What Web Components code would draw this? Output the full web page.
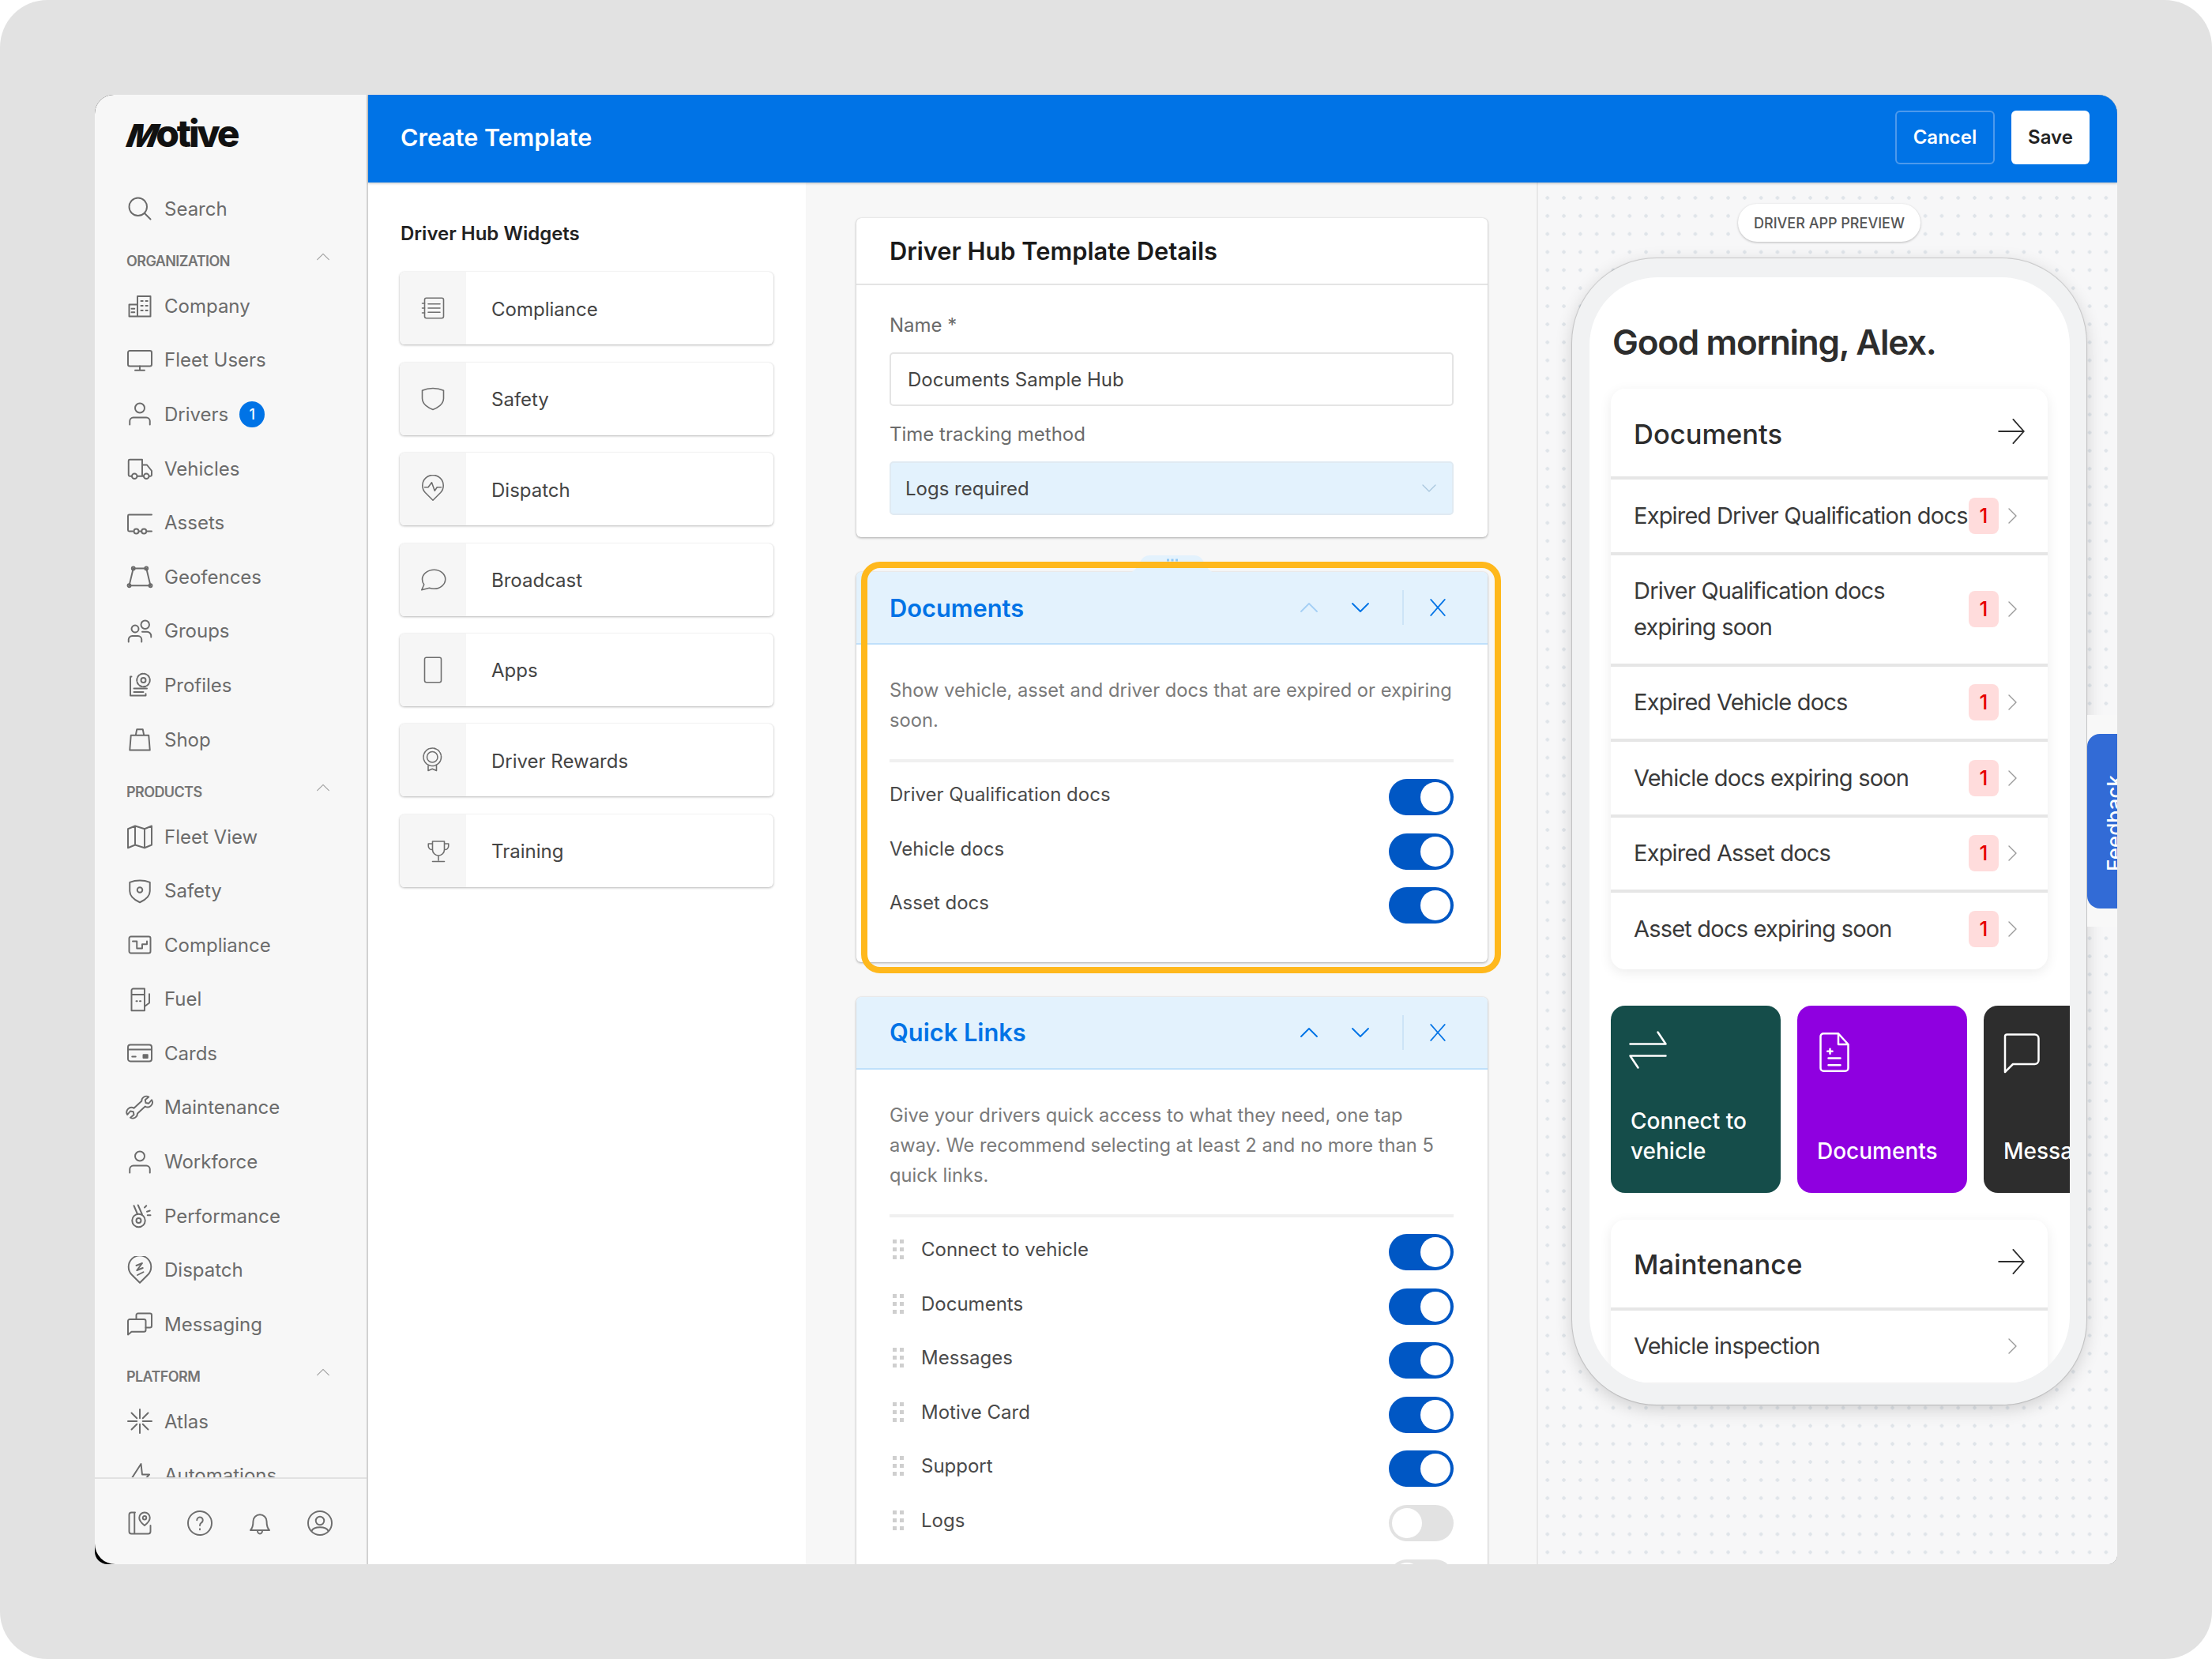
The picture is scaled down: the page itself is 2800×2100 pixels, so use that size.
<!DOCTYPE html>
<html lang="en">
<head>
<meta charset="utf-8">
<title>Create Template</title>
<style>
html, body { margin: 0; padding: 0; background: #fff; }
body { font-family: Inter, "Noto Sans", "Liberation Sans", sans-serif; color: #444; }
</style>
</head>
<body>
<page-frame>
  <side-nav>
    <nav-item icon="search">Search</nav-item>
    <nav-section>ORGANIZATION</nav-section>
    <nav-item icon="company">Company</nav-item>
    <nav-item icon="monitor">Fleet Users</nav-item>
    <nav-item icon="person" count="1">Drivers</nav-item>
    <nav-item icon="truck">Vehicles</nav-item>
    <nav-item icon="trailer">Assets</nav-item>
    <nav-item icon="geofence">Geofences</nav-item>
    <nav-item icon="groups">Groups</nav-item>
    <nav-item icon="profiles">Profiles</nav-item>
    <nav-item icon="bag">Shop</nav-item>
    <nav-section>PRODUCTS</nav-section>
    <nav-item icon="map">Fleet View</nav-item>
    <nav-item icon="shielddot">Safety</nav-item>
    <nav-item icon="wave">Compliance</nav-item>
    <nav-item icon="fuel">Fuel</nav-item>
    <nav-item icon="card">Cards</nav-item>
    <nav-item icon="wrench">Maintenance</nav-item>
    <nav-item icon="person">Workforce</nav-item>
    <nav-item icon="perf">Performance</nav-item>
    <nav-item icon="pinz">Dispatch</nav-item>
    <nav-item icon="messaging">Messaging</nav-item>
    <nav-section>PLATFORM</nav-section>
    <nav-item icon="atlas">Atlas</nav-item>
    <nav-item icon="bolt">Automations</nav-item>
  </side-nav>
  <editor-view>
    <top-bar slot="top">Create Template</top-bar>
    <widget-list slot="left">
      <widget-card icon="list">Compliance</widget-card>
      <widget-card icon="shield">Safety</widget-card>
      <widget-card icon="pinwave">Dispatch</widget-card>
      <widget-card icon="bubble">Broadcast</widget-card>
      <widget-card icon="phone">Apps</widget-card>
      <widget-card icon="rosette">Driver Rewards</widget-card>
      <widget-card icon="trophy" shift="7">Training</widget-card>
    </widget-list>
    <template-column slot="middle">
      <details-card></details-card>
      <section-card heading="Documents" upoff highlighted>
        <span slot="desc">Show vehicle, asset and driver docs that are expired or expiring soon.</span>
        <toggle-row on>Driver Qualification docs</toggle-row>
        <toggle-row on>Vehicle docs</toggle-row>
        <toggle-row on>Asset docs</toggle-row>
      </section-card>
      <section-card heading="Quick Links">
        <span slot="desc">Give your drivers quick access to what they need, one tap<br>away. We recommend selecting at least 2 and no more than 5 quick links.</span>
        <toggle-row on drag>Connect to vehicle</toggle-row>
        <toggle-row on drag>Documents</toggle-row>
        <toggle-row on drag>Messages</toggle-row>
        <toggle-row on drag>Motive Card</toggle-row>
        <toggle-row on drag>Support</toggle-row>
        <toggle-row drag>Logs</toggle-row>
        <toggle-row></toggle-row>
      </section-card>
    </template-column>
    <phone-preview slot="right">
      <hub-card heading="Documents">
        <hub-row count="1">Expired Driver Qualification docs</hub-row>
        <hub-row count="1">Driver Qualification docs expiring soon</hub-row>
        <hub-row count="1">Expired Vehicle docs</hub-row>
        <hub-row count="1">Vehicle docs expiring soon</hub-row>
        <hub-row count="1">Expired Asset docs</hub-row>
        <hub-row count="1">Asset docs expiring soon</hub-row>
      </hub-card>
      <tile-strip>
        <quick-tile color="#154d4a" icon="swap">Connect to vehicle</quick-tile>
        <quick-tile color="#8f00e0" icon="doc">Documents</quick-tile>
        <quick-tile color="#2d2d2d" icon="chat">Messages</quick-tile>
      </tile-strip>
      <hub-card heading="Maintenance" last>
        <hub-row>Vehicle inspection</hub-row>
      </hub-card>
    </phone-preview>
  </editor-view>
</page-frame>

<script>
const GLYPHS = {
  search: '<circle cx="10.5" cy="10.5" r="7.5"/><path d="M16 16l5 5"/>',
  company: '<path d="M3 21V11h7M10 21V4h11v17zM3 21h7"/><path d="M13 8h1.500M17 8h1.500M13 12h1.500M17 12h1.500M13 16h1.500M17 16h1.500M5 14.500h2.500M5 17.500h2.500"/>',
  monitor: '<rect x="2" y="4" width="20" height="13" rx="1.5"/><path d="M12 17v3M8 20.500h8"/>',
  person: '<circle cx="12" cy="7" r="4"/><path d="M3.500 21v-3a3 3 0 0 1 3-3h11a3 3 0 0 1 3 3v3"/>',
  truck: '<path d="M5 18.500H3.500a1 1 0 0 1-1-1V5.500a1 1 0 0 1 1-1H14V18.500M10 18.500h5M14 9h4l4 5v3.500a1 1 0 0 1-1 1h-1"/><circle cx="7.500" cy="18.500" r="2.200"/><circle cx="17.500" cy="18.500" r="2.200"/>',
  trailer: '<path d="M22 5H3a1 1 0 0 0-1 1v12a1 1 0 0 0 1 1h3M11.500 19h1.500M18 19h4"/><circle cx="9" cy="19" r="2"/><circle cx="15.500" cy="19" r="2"/>',
  geofence: '<path d="M6.500 5h11L21 19.500H3z"/><circle cx="6.500" cy="5" r="1.300"/><circle cx="17.500" cy="5" r="1.300"/><circle cx="3" cy="19.500" r="1.300"/><circle cx="21" cy="19.500" r="1.300"/>',
  groups: '<circle cx="8" cy="10" r="3"/><circle cx="16.500" cy="6.500" r="3.500"/><path d="M2.500 21v-2a3 3 0 0 1 3-3h5a3 3 0 0 1 3 3v2M14 12.500h4a3.500 3.500 0 0 1 3.500 3.500v1"/>',
  profiles: '<path d="M5 5H4v16h13v-1.500M7 15h11M7 18h8"/><circle cx="15" cy="8" r="5.500" stroke-dasharray="2.200 1.100"/><circle cx="15" cy="8" r="2"/>',
  bag: '<path d="M4.500 8.500h15l1 12.500h-17zM8.500 8.500 9.500 3.500h5l1 5"/>',
  map: '<path d="M2 5.500 8 3l8 2.500L22 3v16l-6 2.500L8 19l-6 2.500zM8 3v16M16 5.500v16"/>',
  shielddot: '<path d="M12 3c3 0 6 .6 8.500 1.600V12c0 5-4 7.500-8.500 9.500C7.500 19.500 3.500 17 3.500 12V4.600C6 3.600 9 3 12 3z"/><circle cx="12" cy="11" r="2.200"/>',
  wave: '<rect x="3" y="5" width="18" height="14" rx="1.500"/><path d="M6 9h3.500v6H14v-3.500h4V9"/>',
  fuel: '<path d="M5 21.500V4.500A1.500 1.500 0 0 1 6.500 3H16v18.500zM5 8h11M9 13.500h.8M12 13.500h.8M20 7.500V15l-4 3"/>',
  card: '<rect x="2" y="5" width="20" height="14" rx="2"/><path d="M2 9h20M5.500 15h3"/><rect x="15" y="13.500" width="3.500" height="2.500" fill="currentColor"/>',
  wrench: '<path d="M13.500 6.500a4 4 0 0 1 6-3.500l-3 2.500.5 2.500 2.500.5 2.500-3a4 4 0 0 1-5.500 5.500l-6.500 6a4 4 0 0 1-6 3.500l3-2.500-.5-2.500-2.500-.5-2.500 3a4 4 0 0 1 5.500-5.500z"/>',
  perf: '<circle cx="11" cy="16" r="5.500"/><circle cx="11" cy="16" r="2"/><path d="M7 3.500l3 7M10.500 3l3.500 8M16 5l1.500-1.500M18 8.500l2.500-.8M18.500 11.500h2.500"/>',
  pinz: '<path d="M12 22.500 5 15.500A9.500 9.500 0 1 1 19 15.500z"/><path d="M9 8l5-2-4.500 6 5-2M10 16l5-2.500"/>',
  messaging: '<path d="M9 8V4.500A1.500 1.500 0 0 1 10.500 3h10A1.500 1.500 0 0 1 22 4.500v9a1.500 1.500 0 0 1-1.500 1.500H17"/><path d="M3.500 8h12A1.500 1.500 0 0 1 17 9.500V17a1.500 1.500 0 0 1-1.500 1.500H5L2 21V9.500A1.500 1.500 0 0 1 3.500 8z"/>',
  atlas: '<path d="M12 2v7.500M12 14.500V22M2 12h7.500M14.500 12H22M5 5l4.500 4.500M14.500 14.500 19 19M19 5l-4.500 4.500M9.500 14.500 5 19"/>',
  bolt: '<path d="M13 2 4 16h7l-1 6 10-11h-6z"/>',
  bookpin: '<path d="M8 3H5a2 2 0 0 0-2 2v14a2 2 0 0 0 2 2h14a2 2 0 0 0 2-2v-5M7.500 3v18"/><path d="M16 3a4.500 4.500 0 0 1 4.500 4.500c0 3-4.500 6.500-4.500 6.500s-4.500-3.500-4.500-6.500A4.500 4.500 0 0 1 16 3z"/><circle cx="16" cy="7.500" r="1.500"/>',
  help: '<circle cx="12" cy="12" r="10"/><path d="M9.500 9.500a2.500 2.500 0 1 1 3.800 2.100c-.9.6-1.300 1.200-1.300 2.400M12 16.800v.7"/>',
  bell: '<path d="M4 18c1.500-1.500 2.300-4 2.300-7.500a5.700 5.700 0 0 1 11.400 0c0 3.500.8 6 2.300 7.500zM10 18.500a2 2.500 0 0 0 4 0"/>',
  usercircle: '<circle cx="12" cy="12" r="10"/><circle cx="12" cy="10" r="3.500"/><path d="M5 18.500c1-2 3.500-3 7-3s6 1 7 3"/>',
  up: '<path d="M4 16l8-8 8 8"/>',
  down: '<path d="M4 8l8 8 8-8"/>',
  right: '<path d="M8 3l9 9-9 9"/>',
  close: '<path d="M5 4l14 16M19 4 5 20"/>',
  arrow: '<path d="M2 12h20M13.500 2.500 22 12l-8.500 9.500"/>',
  list: '<rect x="5" y="3.500" width="16" height="17" rx="1.500"/><path d="M8 8.500h10M8 12h10M8 15.500h10M3 8h2M3 12h2M3 16h2"/>',
  shield: '<path d="M12 3c3.500 0 6.500.7 9 1.800V11.500c0 4.500-4 7.500-9 9.500-5-2-9-5-9-9.500V4.800C5.500 3.700 8.500 3 12 3z"/>',
  pinwave: '<path d="M12 21.500 5.500 15A8.800 8.800 0 1 1 18.500 15z"/><path d="M5 10.500h3l3-4 2.500 7 2-3h3.500"/>',
  bubble: '<path d="M13 3.500c5 0 9.500 3.500 9.500 8s-4.500 8-9.500 8c-2 0-3-.3-4-.7L2.500 20.500l2-4.500C3.500 14.700 3 13 3 11.500c0-4.500 5-8 10-8z"/>',
  phone: '<rect x="5" y="1.500" width="14" height="21" rx="1.500"/>',
  rosette: '<circle cx="11.500" cy="9.500" r="7.500" stroke-dasharray="2.500 .8"/><circle cx="11.500" cy="9.500" r="4.500"/><path d="M8 17v4l3.500-1.500L15 21v-4"/>',
  trophy: '<path d="M7 4h10v7a5 5 0 0 1-10 0zM7 6H3.500v2a3 3 0 0 0 3.500 3M17 6h3.500v2a3 3 0 0 1-3.500 3M12 16v4M7 21h10"/>',
  swap: '<path d="M3 9h18l-4-6M21 15H3l4 6"/>',
  doc: '<path d="M6.500 2.500H14l5 5.500v12a1.500 1.500 0 0 1-1.500 1.500h-11A1.500 1.500 0 0 1 5 20V4a1.500 1.500 0 0 1 1.500-1.500zM14 2.500V8h5"/><path d="M9 15h6M9 18.500h6M8.500 11.500h2.500M9.800 10.300v2.400"/>',
  chat: '<path d="M5 3h14a2 2 0 0 1 2 2v11a2 2 0 0 1-2 2H8l-4 4V4a1 1 0 0 1 1-1z"/>'
};

class HubIcon extends HTMLElement {
  connectedCallback() {
    if (this.shadowRoot) return;
    const size = this.getAttribute('size') || 36;
    const weight = this.getAttribute('weight') || 1.3;
    this.attachShadow({mode: 'open'}).innerHTML = `
      <style>
        :host { display: inline-flex; flex: none; width: ${size}px; height: ${size}px; }
        svg { width: 100%; height: 100%; display: block; fill: none; stroke: currentColor; stroke-width: ${weight}; stroke-linecap: round; stroke-linejoin: round; }
      </style>
      <svg viewBox="0 0 24 24">${GLYPHS[this.getAttribute('name')] || ''}</svg>`;
  }
}
customElements.define('hub-icon', HubIcon);

class PageFrame extends HTMLElement {
  constructor() {
    super();
    this.attachShadow({mode: 'open'}).innerHTML = `
      <style>
        :host { display: block; box-sizing: border-box; width: 2800px; height: 2100px; padding: 120px; background: #e2e2e2; border-radius: 60px; }
        .shell { display: flex; height: 100%; background: #000; border-radius: 24px 24px 12px 16px; overflow: hidden; }
      </style>
      <div class="shell"><slot></slot></div>`;
  }
}
customElements.define('page-frame', PageFrame);

class SideNav extends HTMLElement {
  constructor() {
    super();
    this.attachShadow({mode: 'open'}).innerHTML = `
      <style>
        :host { display: flex; flex-direction: column; flex: none; box-sizing: border-box; width: 346px; height: 100%; background: #f7f7f7; border-right: 2px solid #d2d2d2; border-bottom-left-radius: 26px; overflow: hidden; }
        .logo { flex: none; height: 110px; box-sizing: border-box; padding: 21px 0 0 32px; color: #111; font-size: 48px; font-weight: 800; letter-spacing: -3.200px; line-height: 56px; white-space: nowrap; }
        .logo b { display: inline-block; font-size: 40px; font-weight: 900; letter-spacing: 0; margin-right: 7px; transform: skewX(-20deg); transform-origin: bottom; }
        .list { flex: 1; min-height: 0; overflow: hidden; }
        .foot { flex: none; height: 110px; box-sizing: border-box; border-top: 2px solid #e2e2e2; display: flex; justify-content: space-between; align-items: center; padding: 4px 41px 0 39px; color: #6e6e6e; }
      </style>
      <div class="logo"><b>M</b>otive</div>
      <div class="list"><slot></slot></div>
      <div class="foot">
        <hub-icon name="bookpin"></hub-icon>
        <hub-icon name="help"></hub-icon>
        <hub-icon name="bell"></hub-icon>
        <hub-icon name="usercircle"></hub-icon>
      </div>`;
  }
}
customElements.define('side-nav', SideNav);

class NavItem extends HTMLElement {
  connectedCallback() {
    if (this.shadowRoot) return;
    const count = this.getAttribute('count');
    this.attachShadow({mode: 'open'}).innerHTML = `
      <style>
        :host { display: flex; align-items: center; gap: 13px; height: 68.6px; padding-left: 39px; color: #6b6b6b; font-size: 24px; white-space: nowrap; }
        .num { display: flex; align-items: center; justify-content: center; width: 32px; height: 33px; margin-left: 1px; border-radius: 50%; background: #0073e6; color: #fff; font-size: 18px; font-weight: 500; }
      </style>
      <hub-icon name="${this.getAttribute('icon')}"></hub-icon>
      <span><slot></slot></span>
      ${count ? `<span class="num">${count}</span>` : ''}`;
  }
}
customElements.define('nav-item', NavItem);

class NavSection extends HTMLElement {
  constructor() {
    super();
    this.attachShadow({mode: 'open'}).innerHTML = `
      <style>
        :host { display: flex; justify-content: space-between; align-items: center; box-sizing: border-box; height: 54.4px; padding: 10px 44px 0 40px; color: #757575; font-size: 18px; font-weight: 600; letter-spacing: -0.6px; }
        hub-icon { margin-top: -12px; color: #a0a0a0; }
      </style>
      <span><slot></slot></span>
      <hub-icon name="up" size="22" weight="1.200"></hub-icon>`;
  }
}
customElements.define('nav-section', NavSection);

class EditorView extends HTMLElement {
  constructor() {
    super();
    this.attachShadow({mode: 'open'}).innerHTML = `
      <style>
        :host { display: flex; flex-direction: column; flex: 1; min-width: 0; height: 100%; background: #fff; }
        .cols { flex: 1; min-height: 0; display: grid; grid-template-columns: 554px 925px 735px; overflow: hidden; }
      </style>
      <slot name="top"></slot>
      <div class="cols">
        <slot name="left"></slot>
        <slot name="middle"></slot>
        <slot name="right"></slot>
      </div>`;
  }
}
customElements.define('editor-view', EditorView);

class TopBar extends HTMLElement {
  constructor() {
    super();
    this.attachShadow({mode: 'open'}).innerHTML = `
      <style>
        :host { display: flex; align-items: center; flex: none; box-sizing: border-box; height: 111px; padding: 0 35px 4px 41px; background: #0073e6; color: #fff; position: relative; z-index: 2; box-shadow: 0 1px 3px rgba(0,0,0,.25); }
        h1 { flex: 1; margin: 0; font-size: 30.500px; font-weight: 600; }
        button { box-sizing: border-box; height: 68px; border-radius: 6px; font: 600 24px Inter, "Noto Sans", sans-serif; }
        .cancel { width: 126px; background: transparent; border: 2px solid #4d9aec; color: #fff; margin-right: 21px; }
        .save { width: 99px; background: #fff; border: 0; color: #222; }
      </style>
      <h1><slot></slot></h1>
      <button class="cancel">Cancel</button>
      <button class="save">Save</button>`;
  }
}
customElements.define('top-bar', TopBar);

class WidgetList extends HTMLElement {
  constructor() {
    super();
    this.attachShadow({mode: 'open'}).innerHTML = `
      <style>
        :host { display: flex; flex-direction: column; gap: 22.400px; box-sizing: border-box; padding: 47px 41px 0 40px; background: #fff; }
        h2 { margin: 0 0 0 1px; height: 44px; font-size: 24px; font-weight: 600; color: #222; line-height: 36px; }
      </style>
      <h2>Driver Hub Widgets</h2>
      <slot></slot>`;
  }
}
customElements.define('widget-list', WidgetList);

class WidgetCard extends HTMLElement {
  connectedCallback() {
    if (this.shadowRoot) return;
    const shift = this.getAttribute('shift') || 0;
    this.attachShadow({mode: 'open'}).innerHTML = `
      <style>
        :host { display: flex; align-items: stretch; flex: none; height: 92px; background: #fff; border-radius: 6px; overflow: hidden; box-shadow: 0 1px 3px rgba(0,0,0,.28), 0 0 1px rgba(0,0,0,.12); color: #444; font-size: 24px; }
        .ic { flex: none; width: 84px; display: flex; align-items: center; justify-content: center; background: #f6f6f6; color: #6e6e6e; }
        hub-icon { transform: translateX(${shift}px); }
        .tx { display: flex; align-items: center; padding: 2px 0 0 32px; }
      </style>
      <div class="ic"><hub-icon name="${this.getAttribute('icon')}" size="36" weight="1.050"></hub-icon></div>
      <div class="tx"><slot></slot></div>`;
  }
}
customElements.define('widget-card', WidgetCard);

class TemplateColumn extends HTMLElement {
  constructor() {
    super();
    this.attachShadow({mode: 'open'}).innerHTML = `
      <style>
        :host { display: flex; flex-direction: column; gap: 44px; box-sizing: border-box; padding: 45px 62px 0 64px; background: #f7f7f7; overflow: hidden; min-width: 0; }
      </style>
      <slot></slot>`;
  }
}
customElements.define('template-column', TemplateColumn);

class DetailsCard extends HTMLElement {
  constructor() {
    super();
    this.attachShadow({mode: 'open'}).innerHTML = `
      <style>
        :host { display: block; flex: none; background: #fff; border-radius: 6px; box-shadow: 0 1px 3px rgba(0,0,0,.32), 0 0 1px rgba(0,0,0,.15); }
        h2 { margin: 0; box-sizing: border-box; height: 85px; padding: 0 42px; display: flex; align-items: center; font-size: 30.800px; font-weight: 600; color: #1a1a1a; border-bottom: 2px solid #e4e4e4; }
        .body { padding: 36px 43px 28px 42px; }
        label { display: block; height: 30px; line-height: 30px; margin-bottom: 19px; font-size: 24px; color: #6b6b6b; }
        .field { box-sizing: border-box; height: 68px; display: flex; align-items: center; justify-content: space-between; border-radius: 5px; font-size: 24px; color: #444; }
        .input { padding-left: 21px; border: 2px solid #e4e4e4; margin-bottom: 21px; }
        .select { padding: 0 17px 0 18px; background: #e3f2fd; border: 2px solid #e0eaf2; color: #444; }
        hub-icon { color: #a9c6dd; }
      </style>
      <h2>Driver Hub Template Details</h2>
      <div class="body">
        <label>Name *</label>
        <div class="field input">Documents Sample Hub</div>
        <label>Time tracking method</label>
        <div class="field select">Logs required<hub-icon name="down" size="24"></hub-icon></div>
      </div>`;
  }
}
customElements.define('details-card', DetailsCard);

class SectionCard extends HTMLElement {
  connectedCallback() {
    if (this.shadowRoot) return;
    const marked = this.hasAttribute('highlighted');
    this.attachShadow({mode: 'open'}).innerHTML = `
      <style>
        :host { display: block; flex: none; position: relative; background: #fff; border-radius: 6px; box-shadow: 0 1px 3px rgba(0,0,0,.32), 0 0 1px rgba(0,0,0,.15); }
        header { box-sizing: border-box; height: 92px; display: flex; align-items: center; padding: 0 48px 0 42px; background: #e3f2fd; border-bottom: 2px solid #bfe0fb; border-radius: 6px 6px 0 0; color: #0073e6; }
        h2 { flex: 1; margin: 0; font-size: 30.800px; font-weight: 600; }
        .up { margin-right: 35px; }
        .off { color: #a6d0f5; }
        .rule { width: 2px; height: 44px; background: #cde4f7; margin: 0 28px 0 38px; }
        .body { padding: 39px 43px 37px 42px; }
        .desc { font-size: 23.700px; line-height: 38px; color: #7a7a7a; padding-bottom: 30px; border-bottom: 4px solid #f0f0f0; margin-bottom: 10px; }
        .mark { position: absolute; left: 6px; right: -17px; top: -13.500px; bottom: -14px; border: 8px solid #ffb81c; border-radius: 24px; pointer-events: none; }
        .tab { position: absolute; left: 343px; top: -21.500px; width: 113px; height: 22px; }
      </style>
      ${marked ? `<svg class="tab" viewBox="0 0 113 22"><path d="M0 22C10 22 12 14 17 7 19 3 23 0 28 0H85C90 0 94 3 96 7 101 14 103 22 113 22z" fill="#e3f2fd"/><path d="M50 6h3M55.500 6h3M61 6h3" stroke="#90c8f5" stroke-width="3"/></svg>` : ''}
      <header>
        <h2>${this.getAttribute('heading')}</h2>
        <hub-icon class="up ${this.hasAttribute('upoff') ? 'off' : ''}" name="up" size="30" weight="1.500"></hub-icon>
        <hub-icon name="down" size="30" weight="1.500"></hub-icon>
        <span class="rule"></span>
        <hub-icon name="close" size="30" weight="1.500"></hub-icon>
      </header>
      <div class="body">
        <div class="desc"><slot name="desc"></slot></div>
        <slot></slot>
      </div>
      ${marked ? '<div class="mark"></div>' : ''}`;
  }
}
customElements.define('section-card', SectionCard);

class ToggleRow extends HTMLElement {
  connectedCallback() {
    if (this.shadowRoot) return;
    const on = this.hasAttribute('on');
    const drag = this.hasAttribute('drag');
    this.attachShadow({mode: 'open'}).innerHTML = `
      <style>
        :host { display: flex; align-items: center; height: 68.600px; font-size: 24px; color: #4a4a4a; }
        .grip { flex: none; width: 22px; margin-right: 18px; margin-top: -6px; }
        .tx { flex: 1; padding-bottom: 7px; }
        switch-toggle { flex: none; }
      </style>
      ${drag ? `<svg class="grip" viewBox="0 0 22 28" height="28"><g fill="#cfcfcf"><rect x="4" y="1" width="5" height="5"/><rect x="13" y="1" width="5" height="5"/><rect x="4" y="11" width="5" height="5"/><rect x="13" y="11" width="5" height="5"/><rect x="4" y="21" width="5" height="5"/><rect x="13" y="21" width="5" height="5"/></g></svg>` : ''}
      <span class="tx"><slot></slot></span>
      <switch-toggle ${on ? 'on' : ''}></switch-toggle>`;
  }
}
customElements.define('toggle-row', ToggleRow);

class SwitchToggle extends HTMLElement {
  connectedCallback() {
    if (this.shadowRoot) return;
    const on = this.hasAttribute('on');
    this.attachShadow({mode: 'open'}).innerHTML = `
      <style>
        :host { display: flex; box-sizing: border-box; width: 82px; height: 46px; padding: 4px; border-radius: 23px; background: ${on ? '#0057c4' : '#e2e2e2'}; justify-content: ${on ? 'flex-end' : 'flex-start'}; }
        i { display: block; width: 38px; height: 38px; border-radius: 50%; background: #fff; }
      </style>
      <i></i>`;
  }
}
customElements.define('switch-toggle', SwitchToggle);

class PhonePreview extends HTMLElement {
  constructor() {
    super();
    this.attachShadow({mode: 'open'}).innerHTML = `
      <style>
        :host { display: flex; flex-direction: column; align-items: center; position: relative; box-sizing: border-box; padding: 27px 38px 0 42px; border-left: 2px solid #e8e8e8; background-color: #f7f7f8; background-image: radial-gradient(circle, #dfe4e9 2px, transparent 2.400px); background-size: 20.800px 22.860px; background-position: 1.400px 8px; overflow: hidden; min-width: 0; }
        .pill { flex: none; box-sizing: border-box; width: 231px; height: 48px; display: flex; align-items: center; justify-content: center; background: #fff; border-radius: 24px; box-shadow: 0 1px 3px rgba(0,0,0,.25); color: #555; font-size: 18px; font-weight: 500; }
        .phone { flex: none; box-sizing: border-box; width: 651px; height: 1451px; margin-top: 21px; padding: 24px 21px 26px 22px; background: #f1f2f3; border-radius: 107px; box-shadow: 0 0 1px 1px rgba(0,0,0,.16), 0 6px 22px rgba(0,0,0,.16); }
        .screen { height: 100%; box-sizing: border-box; background: #fff; border-radius: 86px; overflow: hidden; padding: 54px 0 0 27px; }
        h2 { margin: 0 0 31px 2px; font-size: 44px; letter-spacing: -1.300px; line-height: 56px; font-weight: 600; color: #2d2d2d; }
        .strip { position: absolute; right: 0; top: 674px; width: 38px; height: 268px; background: #f8f8f8; }
        .feedback { position: absolute; right: 0; top: 698px; width: 38px; height: 221px; background: #326bd6; border-radius: 16px 0 0 16px; overflow: hidden; }
        .feedback span { position: absolute; left: 20px; top: 52px; writing-mode: vertical-rl; transform: rotate(180deg); color: #fff; font-size: 26px; font-weight: 500; line-height: 30px; }
      </style>
      <div class="pill">DRIVER APP PREVIEW</div>
      <div class="phone">
        <div class="screen">
          <h2>Good morning, Alex.</h2>
          <slot></slot>
        </div>
      </div>
      <div class="strip"></div>
      <div class="feedback"><span>Feedback</span></div>`;
  }
}
customElements.define('phone-preview', PhonePreview);

class HubCard extends HTMLElement {
  connectedCallback() {
    if (this.shadowRoot) return;
    const last = this.hasAttribute('last');
    this.attachShadow({mode: 'open'}).innerHTML = `
      <style>
        :host { display: block; width: 553px; background: #fff; border-radius: 18px; box-shadow: 0 4px 16px rgba(0,0,0,.08); padding-bottom: ${last ? 0 : 5}px; overflow: ${last ? 'visible' : 'hidden'}; }
        header { box-sizing: border-box; height: 111px; display: flex; align-items: center; justify-content: space-between; padding: 0 27px 0 29px; color: #2d2d2d; }
        h3 { margin: 3px 0 0; font-size: 34.500px; font-weight: 500; }
        hub-icon { margin-top: -4px; }
      </style>
      <header><h3>${this.getAttribute('heading')}</h3><hub-icon name="arrow" size="38" weight="1.150"></hub-icon></header>
      <slot></slot>`;
  }
}
customElements.define('hub-card', HubCard);

class HubRow extends HTMLElement {
  connectedCallback() {
    if (this.shadowRoot) return;
    const count = this.getAttribute('count');
    this.attachShadow({mode: 'open'}).innerHTML = `
      <style>
        :host { display: flex; align-items: center; box-sizing: border-box; min-height: 95.500px; padding: 0 33px 0 29px; border-top: 4px solid #e6e6e6; font-size: 29px; letter-spacing: -0.800px; line-height: 46px; color: #3a3a3a; }
        .tx { flex: 1; min-width: 0; }
        .n { flex: none; width: 38px; height: 46px; margin-right: 5px; display: flex; align-items: center; justify-content: center; background: #ffdcdc; border-radius: 8px; color: #e60000; font-size: 26px; font-weight: 500; letter-spacing: 0; }
        hub-icon { color: #999; }
        :host(:nth-of-type(2)) { min-height: 141px; }
      </style>
      <span class="tx"><slot></slot></span>
      ${count ? `<span class="n">${count}</span>` : ''}
      <hub-icon name="right" size="24" weight="1.400"></hub-icon>`;
  }
}
customElements.define('hub-row', HubRow);

class TileStrip extends HTMLElement {
  constructor() {
    super();
    this.attachShadow({mode: 'open'}).innerHTML = `
      <style>
        :host { display: flex; gap: 21px; margin: 46px 0 34px; overflow: hidden; width: 581px; }
      </style>
      <slot></slot>`;
  }
}
customElements.define('tile-strip', TileStrip);

class QuickTile extends HTMLElement {
  connectedCallback() {
    if (this.shadowRoot) return;
    this.attachShadow({mode: 'open'}).innerHTML = `
      <style>
        :host { display: flex; flex: none; flex-direction: column; justify-content: space-between; box-sizing: border-box; width: 215px; height: 237px; padding: 26px 12px 34px 25px; border-radius: 18px; background: ${this.getAttribute('color')}; color: #fff; font-size: 28px; font-weight: 500; line-height: 38px; white-space: normal; }
        :host(:last-child) { white-space: nowrap; }
        hub-icon { margin-left: -8px; }
        :host([icon="doc"]) hub-icon, :host([icon="chat"]) hub-icon { margin-top: 3px; }
      </style>
      <hub-icon name="${this.getAttribute('icon')}" size="60" weight="1"></hub-icon>
      <span><slot></slot></span>`;
  }
}
customElements.define('quick-tile', QuickTile);
</script>
</body>
</html>
